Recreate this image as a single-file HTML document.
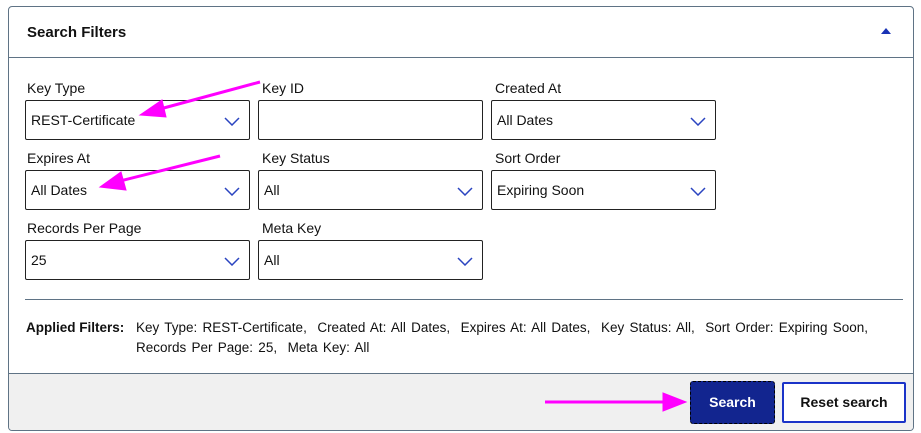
<!DOCTYPE html>
<html><head><meta charset="utf-8"><style>
*{box-sizing:border-box;margin:0;padding:0}
body{width:921px;height:433px;background:#fff;font-family:"Liberation Sans",Arial,sans-serif;position:relative;overflow:hidden;color:#111}
.panel{position:absolute;left:8px;top:6px;width:906px;height:425px;border:1px solid #5f7385;border-radius:4px;overflow:hidden}
.hdr{position:absolute;left:0;top:0;right:0;height:51px;border-bottom:1px solid #5f7385}
.hdr b{position:absolute;left:18px;top:17px;font-size:15px}
.tri{position:absolute;left:872px;top:21px;width:0;height:0;border-left:5px solid transparent;border-right:5px solid transparent;border-bottom:6px solid #1a33b5}
.lbl{position:absolute;font-size:14px;color:#111}
.box{position:absolute;width:225px;height:40px;border:1px solid #222;border-radius:2px;font-size:14px;padding:11px 0 0 5px;color:#111}
.box svg{position:absolute;right:9px;top:16px}
.div{position:absolute;left:25px;top:299px;width:878px;height:1px;background:#5f7385}
.af{position:absolute;font-size:13.5px;color:#111;word-spacing:1.5px;white-space:nowrap}
.foot{position:absolute;left:0;top:366px;right:0;bottom:0;background:#f0f0f0;border-top:1px solid #5f7385}
.btn1{position:absolute;left:690px;top:381px;width:85px;height:43px;background:#12258f;border:1px dashed #000;border-radius:3px;color:#fff;font-weight:bold;font-size:14px;text-align:center;line-height:41px}
.btn2{position:absolute;left:782px;top:382px;width:124px;height:41px;background:#fff;border:2px solid #1a33c8;border-radius:2px;color:#111;font-weight:bold;font-size:14px;text-align:center;line-height:37px}
</style></head><body>
<div class="panel"><div class="hdr"><b>Search Filters</b><div class="tri"></div></div><div class="foot"></div></div>

<div class="lbl" style="left:27px;top:80px">Key Type</div>
<div class="lbl" style="left:262px;top:80px">Key ID</div>
<div class="lbl" style="left:495px;top:80px">Created At</div>
<div class="lbl" style="left:27px;top:150px">Expires At</div>
<div class="lbl" style="left:262px;top:150px">Key Status</div>
<div class="lbl" style="left:495px;top:150px">Sort Order</div>
<div class="lbl" style="left:27px;top:220px">Records Per Page</div>
<div class="lbl" style="left:262px;top:220px">Meta Key</div>

<div class="box" style="left:25px;top:100px">REST-Certificate<svg width="16" height="9" viewBox="0 0 16 9"><path d="M1 1L8 8L15 1" fill="none" stroke="#2a44c0" stroke-width="1.5"/></svg></div>
<div class="box" style="left:258px;top:100px"></div>
<div class="box" style="left:491px;top:100px">All Dates<svg width="16" height="9" viewBox="0 0 16 9"><path d="M1 1L8 8L15 1" fill="none" stroke="#2a44c0" stroke-width="1.5"/></svg></div>
<div class="box" style="left:25px;top:170px">All Dates<svg width="16" height="9" viewBox="0 0 16 9"><path d="M1 1L8 8L15 1" fill="none" stroke="#2a44c0" stroke-width="1.5"/></svg></div>
<div class="box" style="left:258px;top:170px">All<svg width="16" height="9" viewBox="0 0 16 9"><path d="M1 1L8 8L15 1" fill="none" stroke="#2a44c0" stroke-width="1.5"/></svg></div>
<div class="box" style="left:491px;top:170px">Expiring Soon<svg width="16" height="9" viewBox="0 0 16 9"><path d="M1 1L8 8L15 1" fill="none" stroke="#2a44c0" stroke-width="1.5"/></svg></div>
<div class="box" style="left:25px;top:240px">25<svg width="16" height="9" viewBox="0 0 16 9"><path d="M1 1L8 8L15 1" fill="none" stroke="#2a44c0" stroke-width="1.5"/></svg></div>
<div class="box" style="left:258px;top:240px">All<svg width="16" height="9" viewBox="0 0 16 9"><path d="M1 1L8 8L15 1" fill="none" stroke="#2a44c0" stroke-width="1.5"/></svg></div>

<div class="div"></div>
<div class="af" style="left:26px;top:320px;font-weight:bold;word-spacing:0">Applied Filters:</div>
<div class="af" style="left:136px;top:320px">Key Type: REST-Certificate,&nbsp; Created At: All Dates,&nbsp; Expires At: All Dates,&nbsp; Key Status: All,&nbsp; Sort Order: Expiring Soon,</div>
<div class="af" style="left:136px;top:340px">Records Per Page: 25,&nbsp; Meta Key: All</div>

<div class="btn1">Search</div>
<div class="btn2">Reset search</div>

<svg style="position:absolute;left:0;top:0" width="921" height="433">
<g fill="#ff00ff" stroke="#ff00ff">
<line x1="260" y1="82" x2="160" y2="109" stroke-width="3"/>
<polygon points="140,115 162,100 166,117" stroke-width="1"/>
<line x1="220" y1="156" x2="120" y2="181" stroke-width="3"/>
<polygon points="100,187 121,172 126,190" stroke-width="1"/>
<line x1="545" y1="402" x2="665" y2="402" stroke-width="3"/>
<polygon points="686,402 663,393 663,411" stroke-width="1"/>
</g>
</svg>
</body></html>
